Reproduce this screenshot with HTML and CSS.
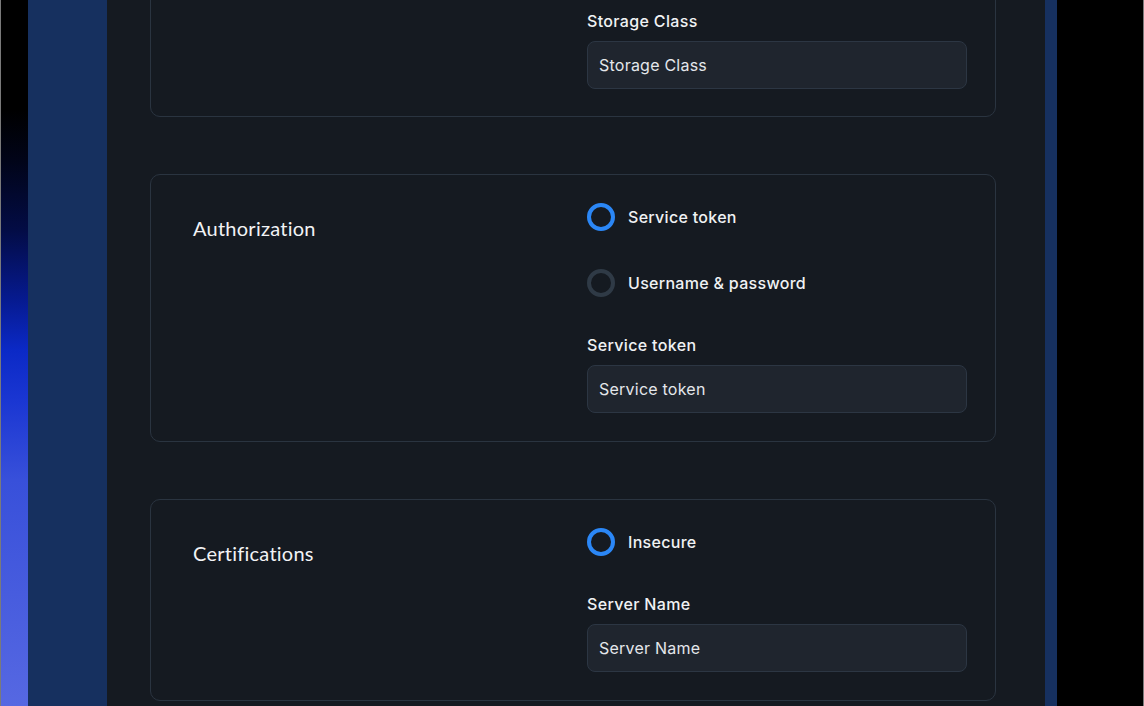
FILE: index.html
```html
<!DOCTYPE html>
<html lang="en">
<head>
<meta charset="utf-8">
<title>Settings</title>
<link rel="stylesheet" href="styles.css">
</head>
<body>
<div class="frame">
  <div class="edge-glow"></div>
  <div class="side-band"></div>
  <main class="content">
    <section class="card card-first">
      <div class="card-title"></div>
      <div class="card-body">
        <div class="field">
          <label class="field-label">Storage Class</label>
          <div class="input">Storage Class</div>
        </div>
      </div>
    </section>

    <section class="card">
      <h2 class="card-title">Authorization</h2>
      <div class="card-body">
        <div class="radio-group">
          <div class="radio-item"><span class="radio radio-on"></span><span class="radio-text">Service token</span></div>
          <div class="radio-item"><span class="radio"></span><span class="radio-text">Username &amp; password</span></div>
        </div>
        <div class="field">
          <label class="field-label">Service token</label>
          <div class="input">Service token</div>
        </div>
      </div>
    </section>

    <section class="card">
      <h2 class="card-title">Certifications</h2>
      <div class="card-body">
        <div class="radio-group">
          <div class="radio-item"><span class="radio radio-on"></span><span class="radio-text">Insecure</span></div>
        </div>
        <div class="field">
          <label class="field-label">Server Name</label>
          <div class="input">Server Name</div>
        </div>
      </div>
    </section>
  </main>
  <div class="side-band side-band-right"></div>
  <div class="outside"></div>
</div>
</body>
</html>
```
FILE: styles.css
```css
* { box-sizing: border-box; }
html, body { margin: 0; padding: 0; height: 100%; background: #000; overflow: hidden; }
body { font-family: Inter, "Noto Sans", sans-serif; }

.frame {
  display: flex;
  height: 706px;
  width: 1144px;
  border-left: 1px solid #7a7a7a;
  border-right: 1px solid #7a7a7a;
}
.edge-glow {
  width: 27px;
  flex: none;
  background: linear-gradient(to bottom,
    #000 0px, #000 110px, #010418 160px, #030c45 230px,
    #061a90 300px, #0b29c6 350px, #1a36d2 400px, #3850da 480px, #5668e2 706px);
}
.side-band { width: 79px; flex: none; background: #16305f; }
.side-band-right { width: 12px; }
.outside { flex: 1; background: #000; }

.content {
  width: 938px;
  flex: none;
  background: #151a21;
  padding-left: 43px;
  overflow: hidden;
}

.card {
  width: 846px;
  display: grid;
  grid-template-columns: 1fr 380px;
  border: 1px solid #2a3440;
  border-radius: 10px;
  padding: 28px 28px 28px 42px;
  margin-bottom: 57px;
}
.card-first { margin-top: -20px; padding-bottom: 27px; }

.card-title {
  margin: 0;
  padding-top: 10px;
  font-family: Lato, "Open Sans", sans-serif;
  font-weight: 400;
  font-size: 20px;
  line-height: 30px;
  color: #f2f3f5;
  letter-spacing: 0.25px;
}

.card-body { display: flex; flex-direction: column; }

.radio-group { display: flex; flex-direction: column; gap: 38px; margin-bottom: 36px; }
.radio-item { display: flex; align-items: center; gap: 13px; height: 28px; }
.radio {
  width: 28px; height: 28px; border-radius: 50%;
  border: 4.5px solid #2f3a46;
  flex: none;
}
.radio-on { border-color: #2b87f6; }
.radio-text { font-size: 16px; font-weight: 450; color: #f0f2f4; line-height: 24px; letter-spacing: 0.3px; }

.field { display: flex; flex-direction: column; gap: 8px; }
.field-label { font-size: 16px; font-weight: 450; color: #f0f2f4; line-height: 24px; letter-spacing: 0.35px; }
.input {
  height: 48px;
  border: 1px solid #2c3643;
  border-radius: 8px;
  background: #1f252e;
  padding: 0 11px;
  display: flex; align-items: center;
  font-size: 16px;
  color: #e4e7eb;
  letter-spacing: 0.23px;
}
```
